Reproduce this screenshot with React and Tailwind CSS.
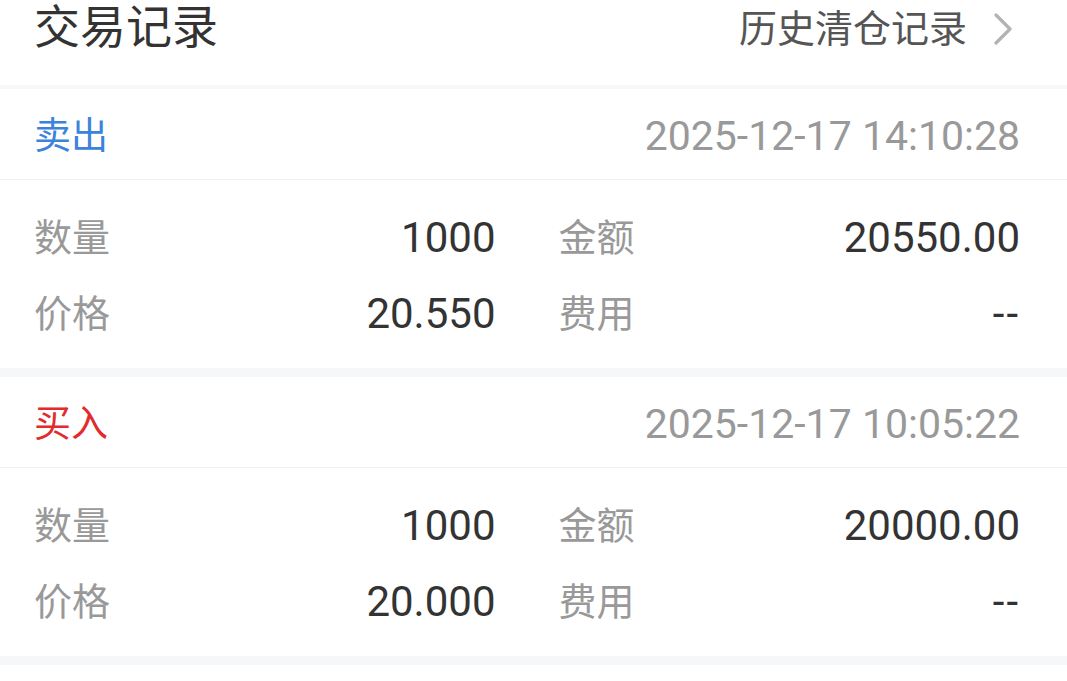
import React from 'react';

const trades = [
  {
    side: '卖出',
    sideColor: 'text-[#3b83db]',
    time: '2025-12-17 14:10:28',
    qty: '1000',
    amount: '20550.00',
    price: '20.550',
    fee: '--',
  },
  {
    side: '买入',
    sideColor: 'text-[#e22b2b]',
    time: '2025-12-17 10:05:22',
    qty: '1000',
    amount: '20000.00',
    price: '20.000',
    fee: '--',
  },
];

const Cell = ({ label, value }) => (
  <div className="flex items-center justify-between h-[76px]">
    <span className="text-[38px] text-[#999999] leading-none">{label}</span>
    <span className={`text-[42px] text-[#333333] leading-none ${value === '--' ? 'tracking-[2px]' : ''}`}>{value}</span>
  </div>
);

const TradeCard = ({ t }) => (
  <div className="bg-white">
    <div className="h-[91px] pt-[4px] flex items-center justify-between pl-[34px] pr-[47px] border-b border-[#f2f2f2]">
      <span className={`text-[37px] leading-none ${t.sideColor}`}>{t.side}</span>
      <span className="text-[41px] leading-none text-[#999999]">{t.time}</span>
    </div>
    <div className="pt-[20px] pb-[16px] pl-[34px] pr-[47px] grid grid-cols-2 gap-x-[63px]">
      <Cell label="数量" value={t.qty} />
      <Cell label="金额" value={t.amount} />
      <Cell label="价格" value={t.price} />
      <Cell label="费用" value={t.fee} />
    </div>
  </div>
);

export default function App() {
  return (
    <div
      className="w-[1067px] h-[681px] bg-white overflow-hidden"
      style={{ fontFamily: 'Roboto, "Noto Sans CJK SC", sans-serif' }}
    >
      <div className="h-[85px] flex items-start justify-between pl-[34px] pr-[54px] pt-[4px]">
        <span className="text-[46px] leading-none text-[#333333]">交易记录</span>
        <div className="flex items-center gap-[26px] pt-[6px]">
          <span className="text-[38px] leading-none text-[#555555]">历史清仓记录</span>
          <svg width="20" height="32" viewBox="0 0 20 32" fill="none">
            <path d="M3 2 L17 16 L3 30" stroke="#b3b3b3" strokeWidth="3.2" strokeLinecap="round" strokeLinejoin="round" />
          </svg>
        </div>
      </div>
      <div className="h-[4px] bg-[#f5f7f9]" />
      {trades.map((t, i) => (
        <React.Fragment key={i}>
          <TradeCard t={t} />
          <div className="h-[9px] bg-[#f5f7f9]" />
        </React.Fragment>
      ))}
    </div>
  );
}
